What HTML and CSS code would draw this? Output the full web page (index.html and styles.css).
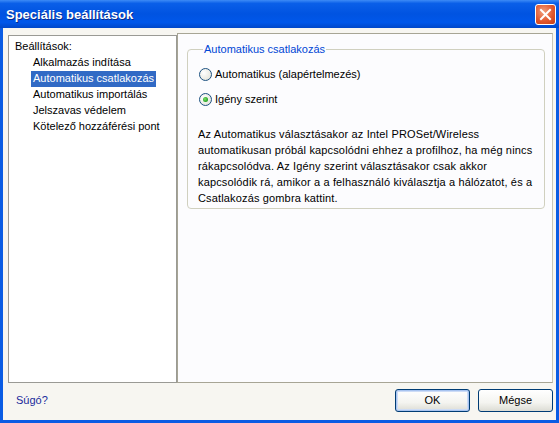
FILE: index.html
```html
<!DOCTYPE html>
<html lang="hu">
<head>
    <meta charset="UTF-8">
    <title>Speciális beállítások</title>
    <link rel="stylesheet" href="styles.css">
</head>
<body>
    <div class="window">
        <div class="titlebar">
            <span class="title">Speciális beállítások</span>
            <button class="close-btn" aria-label="Bezárás">
                <svg width="13" height="13" viewBox="0 0 13 13">
                    <path d="M2 2 L11 11 M11 2 L2 11" stroke="#fff" stroke-width="2" stroke-linecap="square"/>
                </svg>
            </button>
        </div>

        <div class="content">
            <div class="main">
                <div class="tree">
                    <div class="tree-root">Beállítások:</div>
                    <div class="tree-item">Alkalmazás indítása</div>
                    <div class="tree-item selected">Automatikus csatlakozás</div>
                    <div class="tree-item">Automatikus importálás</div>
                    <div class="tree-item">Jelszavas védelem</div>
                    <div class="tree-item">Kötelező hozzáférési pont</div>
                </div>

                <div class="panel">
                    <fieldset class="group">
                        <legend>Automatikus csatlakozás</legend>
                        <label class="radio">
                            <span class="radio-dot"></span>
                            Automatikus (alapértelmezés)
                        </label>
                        <label class="radio">
                            <span class="radio-dot checked"></span>
                            Igény szerint
                        </label>
                        <p class="desc">Az Automatikus választásakor az Intel PROSet/Wireless automatikusan próbál kapcsolódni ehhez a profilhoz, ha még nincs rákapcsolódva. Az Igény szerint választásakor csak akkor kapcsolódik rá, amikor a a felhasználó kiválasztja a hálózatot, és a Csatlakozás gombra kattint.</p>
                    </fieldset>
                </div>
            </div>

            <div class="footer">
                <a href="#" class="help-link">Súgó?</a>
                <div class="buttons">
                    <button class="btn default">OK</button>
                    <button class="btn">Mégse</button>
                </div>
            </div>
        </div>
    </div>
</body>
</html>
```

FILE: styles.css
```css
* {
    margin: 0;
    padding: 0;
    box-sizing: border-box;
}

body {
    font-family: 'Liberation Sans', Arial, sans-serif;
    font-size: 11px;
    color: #000;
    background: #fff;
}

.window {
    width: 559px;
    height: 423px;
    display: flex;
    flex-direction: column;
    background: #0a5ce4;
    padding: 0 3px 3px 3px;
}

.titlebar {
    height: 28px;
    flex-shrink: 0;
    display: flex;
    align-items: center;
    justify-content: space-between;
    margin: 0 -3px;
    padding: 0 3px 0 6px;
    background: linear-gradient(to bottom, #3d8bf6 0%, #0a5fe8 12%, #0053e1 50%, #0057ea 80%, #0047c9 100%);
}

.title {
    color: #fff;
    font-family: 'Liberation Sans', Arial, sans-serif;
    font-weight: bold;
    font-size: 13px;
    text-shadow: 1px 1px 0 #0a2a8a;
}

.close-btn {
    width: 21px;
    height: 21px;
    border: 1px solid #fff;
    border-radius: 3px;
    background: radial-gradient(circle at 40% 35%, #f0a080 0%, #e2582f 55%, #c63d14 100%);
    display: flex;
    align-items: center;
    justify-content: center;
}

.content {
    flex: 1;
    display: flex;
    flex-direction: column;
    background: #f7f6f1;
    padding: 5px 3px 0 5px;
}

.main {
    display: flex;
    height: 350px;
}

.tree {
    width: 169px;
    margin-top: 2px;
    height: 348px;
    background: #fff;
    border: 1px solid #9a9a95;
    padding: 3px 0 0 0;
}

.tree-root {
    height: 16px;
    line-height: 15px;
    padding-left: 6px;
}

.tree-item {
    height: 16px;
    line-height: 15px;
    margin-left: 22px;
    padding: 0 2px;
    width: fit-content;
}

.tree-item.selected {
    background: #316ac5;
    color: #fff;
}

.panel {
    flex: 1;
    background: #fcfcfe;
    border: 1px solid #a7a595;
    border-right-color: #c8c6b8;
    padding: 9px 7px 0 9px;
}

.group {
    border: 1px solid #d0d0bf;
    border-radius: 4px;
    padding: 12px 8px 2px 10px;
}

.group legend {
    color: #0046d5;
    padding: 0 1px;
    margin-left: 5px;
}

.radio {
    display: flex;
    align-items: center;
    gap: 3px;
    height: 14px;
    margin-bottom: 11px;
    margin-left: 1px;
}

.radio-dot {
    width: 13px;
    height: 13px;
    border-radius: 50%;
    border: 1px solid #1c5180;
    background: radial-gradient(circle at 35% 35%, #ffffff 0%, #e8e8e0 70%, #d6d5cb 100%);
    display: flex;
    align-items: center;
    justify-content: center;
}

.radio-dot.checked::after {
    content: '';
    width: 5px;
    height: 5px;
    border-radius: 50%;
    background: radial-gradient(circle at 40% 40%, #7fe06a 0%, #21a121 70%);
}

.desc {
    margin-top: 20px;
    line-height: 16px;
    letter-spacing: 0.15px;
}

.footer {
    flex: 1;
    display: flex;
    justify-content: space-between;
    align-items: center;
    padding: 0 0 3px 8px;
}

.help-link {
    color: #1a2b9c;
    text-decoration: none;
}

.buttons {
    display: flex;
    gap: 8px;
}

.btn {
    width: 75px;
    height: 23px;
    font-family: inherit;
    font-size: 11px;
    border: 1px solid #003c74;
    border-radius: 3px;
    background: linear-gradient(to bottom, #ffffff 0%, #f4f4f0 60%, #dcdcd4 100%);
    color: #000;
}

.btn.default {
    box-shadow: inset 0 0 0 1px #a8c4f0, inset 0 0 0 2px #cddcf6;
}
```
